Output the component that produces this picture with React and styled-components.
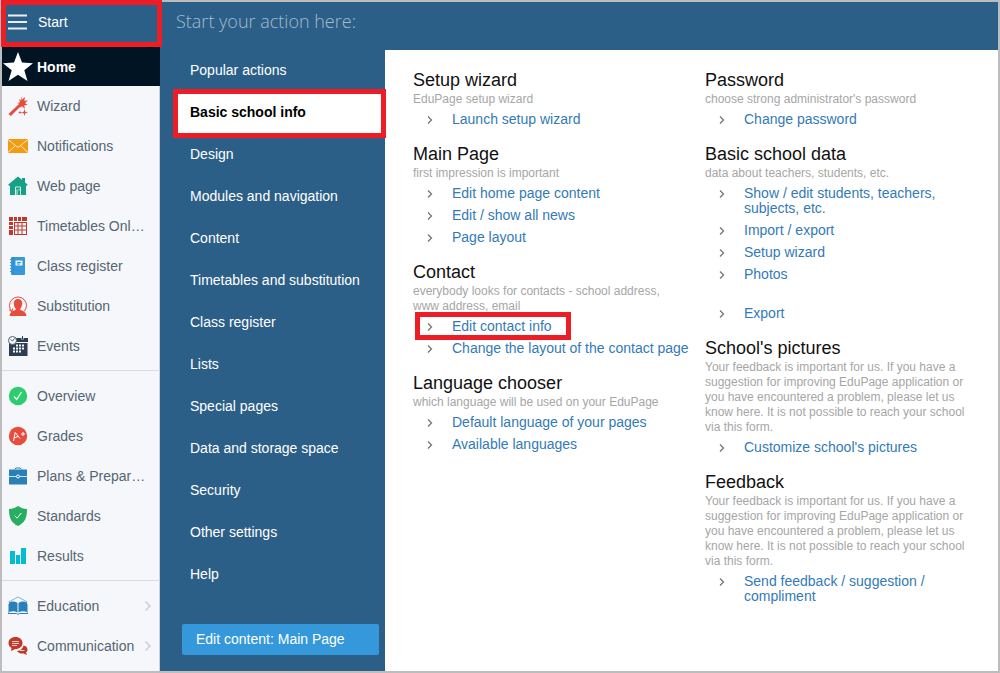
import React from 'react';
import styled, { createGlobalStyle, css } from 'styled-components';

const GlobalStyle = createGlobalStyle`
  *, *::before, *::after { box-sizing: border-box; }
  body {
    margin: 0;
    font-family: "Liberation Sans", Arial, sans-serif;
    font-size: 14px;
    background: #fff;
  }
  a { color: inherit; text-decoration: none; }
  ul { list-style: none; margin: 0; padding: 0; }
`;

const highlight = css`
  position: relative;
  &::after {
    content: "";
    position: absolute;
    border: 5px solid #ee1c25;
    pointer-events: none;
    z-index: 2;
  }
`;

const Frame = styled.div`
  display: flex;
  min-height: 100vh;
  border: 2px solid #bdbdbd;
`;

const Sidebar = styled.nav`
  flex: 0 0 158px;
  background: #f5f7fa;
  box-shadow: inset -1px 0 #c9d1d9;
`;

const StartButton = styled.button`
  ${highlight}
  display: flex;
  align-items: center;
  gap: 10px;
  width: 100%;
  height: 45px;
  padding: 0 6px 6px;
  border: 0;
  background: #2c5f88;
  color: #fff;
  font: inherit;
  text-align: left;
  &::after { inset: -2px -2px 0 -1px; }
`;

const HomeLink = styled.a`
  display: flex;
  align-items: center;
  gap: 4px;
  height: 39px;
  padding-left: 1px;
  background: #001423;
  color: #fff;
  font-weight: bold;
`;

const NavGroup = styled.ul`
  padding: ${(p) => (p.$first ? '0 0 4px' : '5px 0 4px')};
  border-top: ${(p) => (p.$first ? '0' : '1px solid #d9dcdf')};
`;

const NavLink = styled.a`
  display: flex;
  align-items: center;
  gap: 9px;
  height: 40px;
  padding: 0 9px 0 6px;
  color: #566573;
`;

const NavLabel = styled.span`
  flex: 1;
  white-space: nowrap;
`;

const Icon = styled.svg`
  flex: none;
  display: block;
`;

const Main = styled.main`
  flex: 1;
  display: flex;
  flex-direction: column;
  min-width: 0;
  background: #2c5f88;
`;

const Title = styled.h1`
  margin: 0;
  height: 48px;
  padding: 7px 16px 0;
  font: 300 18px/24px "Open Sans", sans-serif;
  color: #a3bccf;
`;

const Body = styled.div`
  flex: 1;
  display: flex;
`;

const Menu = styled.div`
  flex: 0 0 225px;
  display: flex;
  flex-direction: column;
`;

const MenuLink = styled.a`
  display: flex;
  align-items: center;
  height: 42px;
  margin-left: 16px;
  padding: 0 0 2px 14px;
  color: #fff;
  ${(p) =>
    p.$active &&
    css`
      ${highlight}
      background: #fff;
      color: #000;
      font-weight: bold;
      &::after { inset: -3px -1px -4px -3px; }
    `}
`;

const EditButton = styled.button`
  height: 31px;
  margin: 28px 6px 16px 22px;
  padding: 0 14px 2px;
  border: 0;
  border-radius: 2px;
  background: #3498db;
  color: #fff;
  font: inherit;
  text-align: left;
`;

const Content = styled.div`
  flex: 1;
  display: grid;
  grid-template-columns: 1fr 1fr;
  align-items: start;
  gap: 10px;
  padding: 19px 11px 20px 28px;
  background: #fff;
`;

const Section = styled.section`
  margin-bottom: 13px;
`;

const Heading = styled.h2`
  margin: 0 0 1px;
  font: 400 18px/22px "Liberation Sans", Arial, sans-serif;
  color: #111;
`;

const Note = styled.p`
  max-width: 272px;
  margin: 0 0 1px;
  font-size: 12px;
  line-height: 15px;
  color: #a6a6a6;
`;

const ActionItem = styled.li`
  display: flex;
  align-items: flex-start;
  padding: 4px 0 3px 14px;
  margin-top: ${(p) => (p.$spaced ? '17px' : '0')};
  line-height: 15px;
  color: #337ab7;
  ${(p) =>
    p.$marked &&
    css`
      ${highlight}
      &::after { left: 2px; top: -3px; width: 156px; height: 28px; }
    `}
`;

const Bullet = styled(Icon)`
  margin: 4px 19px 0 0;
`;

const icons = {
  wizard: (
    <>
      <path d="M0.500 18 11.500 7.500l2 2L2.800 20z" fill="#e74c3c" />
      <path d="m13 0 1 3.400L17 1l-.7 3.800L20 4.500l-3 2.500 2.800 2-3.600.2L17 13l-3-2.800-1.400 1.200-2-2 1.200-1.300-2.800-1.200 3-.7-1-3.200 2.300 1.400z" fill="#e74c3c" />
      <path d="m16.500 13 .8 2.700 2.700.8-2.700.8-.8 2.700-.8-2.700-2.700-.8 2.700-.8zM12 14.500l.5 1.500 1.500.5-1.500.5-.5 1.500-.5-1.500-1.500-.5 1.500-.5z" fill="#e74c3c" />
    </>
  ),
  mail: (
    <>
      <path d="M0 3h20v14H0z" fill="#f39c12" />
      <path d="m0 3.500 10 8 10-8M0 16.500 7 10M20 16.500 13 10" fill="none" stroke="#fdebd0" strokeWidth="1" />
    </>
  ),
  house: (
    <>
      <path d="m10 .5 9.500 8-.6 1.500-.9-.5V19H2V9.500l-1 .5-.7-1.500zM14 2h3v5l-3-2.500z" fill="#16a085" />
      <path d="M7.500 19v-8h5v8M9 13.500v5.500M11 13v1.500" fill="none" stroke="#d5f0e8" strokeWidth="1" />
    </>
  ),
  table: (
    <>
      <path d="M1 1h18v18H1z" fill="#c0392b" />
      <path d="M5.500 1v18M9.500 1v4M13.500 1v4M1 5.500h18M1 9.500h4M1 13.500h4" stroke="#f5f7fa" strokeWidth="1" />
      <path d="M7 7h2.500v2.500H7zm3.500 0h3v2.500h-3zm4 0H18v2.500h-3.500zM7 10.500h2.500v3H7zm3.500 0h3v3h-3zm4 0H18v3h-3.500zM7 14.500h2.500V18H7zm3.500 0h3V18h-3zm4 0H18V18h-3.500z" fill="#f5f7fa" />
    </>
  ),
  book: (
    <>
      <rect x="3" y="1" width="14" height="18" rx="1" fill="#3498db" />
      <path d="M2 3.500h3M2 6.500h3M2 9.500h3M2 12.500h3M2 15.500h3" stroke="#3498db" strokeWidth="1" />
      <path d="M5.500 1v18" stroke="#2f8bc9" />
      <path d="M7.500 4.500h7v5h-7z" fill="#eaf5fc" />
      <path d="M9 6.500h4M9 8h3" stroke="#3498db" strokeWidth="1" />
    </>
  ),
  person: (
    <>
      <path d="M10 3c2.800 0 4.300 1.900 4.200 4.500-.1 2.300-.9 3.900-1.800 5v1.500c2.500 1 5.600 1.600 6 6H1.600c.4-4.400 3.500-5 6-6v-1.500c-.9-1.100-1.700-2.700-1.800-5C5.700 4.900 7.200 3 10 3z" fill="#e74c3c" />
      <path d="M4 15.500A8.500 8.500 0 1 1 16 15.500" fill="none" stroke="#e74c3c" strokeWidth="1" />
      <path d="M1 13.500 3.800 16l1-3.500" fill="none" stroke="#e74c3c" strokeWidth="1" />
    </>
  ),
  calendar: (
    <>
      <path d="M1 2h19v4H1zM1 7h18.500v13H1z" fill="#2c3e50" />
      <path d="M14.500 0v3.500" stroke="#f5f7fa" strokeWidth="2" />
      <path d="M14.500 0v3" stroke="#2c3e50" />
      <path d="M8 8.500h2v2H8zm3 0h2v2h-2zm3 0h2v2h-2zM5 11.500h2v2H5zm3 0h2v2H8zm3 0h2v2h-2zm3 0h2v2h-2zM5 14.500h2v2H5zm3 0h2v2H8zm3 0h2v2h-2z" fill="#f5f7fa" />
      <circle cx="4.500" cy="4.500" r="4" fill="#f5f7fa" stroke="#53616f" />
      <path d="M2.500 3.500 4.500 5 6.500 2.500" fill="none" stroke="#53616f" />
    </>
  ),
  check: (
    <>
      <circle cx="10" cy="10" r="9.200" fill="#2ecc71" />
      <path d="m6 10.500 2.700 3L13.500 6" fill="none" stroke="#fff" strokeWidth="1.200" />
    </>
  ),
  grade: (
    <>
      <circle cx="10" cy="10" r="9.200" fill="#e74c3c" />
      <path d="m5.500 15 1.700-8.500L12 12.500M6.200 12l4-1.700M13 8h4M15 6v4" fill="none" stroke="#fff" strokeWidth="1" />
    </>
  ),
  briefcase: (
    <>
      <path d="M1 3.500h18v15H1z" fill="#2980b9" />
      <path d="M6.500 3.500 8 2h4l1.500 1.500" fill="none" stroke="#2980b9" />
      <path d="M1 10.500h18" stroke="#cfe3f1" />
      <circle cx="10" cy="10.500" r="1.500" fill="#2980b9" stroke="#fff" />
    </>
  ),
  shield: (
    <>
      <path d="M10 0c2.700 2 5.700 3 9 3 .1 8-1.800 13.800-9 17C2.800 16.800.9 11 1 3c3.300 0 6.300-1 9-3z" fill="#27ae60" />
      <path d="m6.700 9.700 2.400 2.500 4.200-5.200" fill="none" stroke="#fff" />
    </>
  ),
  bars: <path d="M2 5h5v13H2zm6 4h4v9H8zm5-7h5v16h-5z" fill="#00bcd4" />,
  reader: (
    <>
      <path d="M0.500 6 10 1l9.500 5" fill="none" stroke="#7fb2d6" strokeWidth="1" />
      <path d="M1 6.500C4 5 7 5 9.500 7v9.500C7 15 4 15 1 16zM19 6.500C16 5 13 5 10.500 7v9.500C13 15 16 15 19 16z" fill="#2980b9" />
      <path d="M0 8v9.500h8.500L10 18.500l1.500-1H20V8" fill="none" stroke="#2980b9" />
    </>
  ),
  chat: (
    <>
      <path d="M15.500 9.500c2.400.5 4 1.800 4 4 0 1.300-.6 2.300-1.500 3l1 2.500-3.500-1.500c-3 .3-5.700-.7-6.500-2.500 3.500-.3 6-2.500 6.500-5.500z" fill="#c0392b" />
      <path d="M7.500 1c4 0 7 2.500 7 6s-3 6-7 6l-4.500 2 .5-3C1.700 11 .5 9.300.5 7c0-3.500 3-6 7-6z" fill="#c0392b" />
      <path d="M4 5.500h7M4 7.500h7M4 9.500h5" stroke="#f3c9c5" />
      <path d="M12 14.500h4.500" stroke="#f3c9c5" />
    </>
  ),
};

const navGroups = [
  [
    ['wizard', 'Wizard'],
    ['mail', 'Notifications'],
    ['house', 'Web page'],
    ['table', 'Timetables Onl…'],
    ['book', 'Class register'],
    ['person', 'Substitution'],
    ['calendar', 'Events'],
  ],
  [
    ['check', 'Overview'],
    ['grade', 'Grades'],
    ['briefcase', 'Plans & Prepar…'],
    ['shield', 'Standards'],
    ['bars', 'Results'],
  ],
  [
    ['reader', 'Education', true],
    ['chat', 'Communication', true],
  ],
];

const menu = [
  'Popular actions',
  'Basic school info',
  'Design',
  'Modules and navigation',
  'Content',
  'Timetables and substitution',
  'Class register',
  'Lists',
  'Special pages',
  'Data and storage space',
  'Security',
  'Other settings',
  'Help',
];

const feedbackNote =
  'Your feedback is important for us. If you have a suggestion for improving EduPage application or you have encountered a problem, please let us know here. It is not possible to reach your school via this form.';

const columns = [
  [
    { title: 'Setup wizard', note: 'EduPage setup wizard', links: [{ text: 'Launch setup wizard' }] },
    {
      title: 'Main Page',
      note: 'first impression is important',
      links: [{ text: 'Edit home page content' }, { text: 'Edit / show all news' }, { text: 'Page layout' }],
    },
    {
      title: 'Contact',
      note: 'everybody looks for contacts - school address, www address, email',
      links: [{ text: 'Edit contact info', marked: true }, { text: 'Change the layout of the contact page' }],
    },
    {
      title: 'Language chooser',
      note: 'which language will be used on your EduPage',
      links: [{ text: 'Default language of your pages' }, { text: 'Available languages' }],
    },
  ],
  [
    { title: 'Password', note: "choose strong administrator's password", links: [{ text: 'Change password' }] },
    {
      title: 'Basic school data',
      note: 'data about teachers, students, etc.',
      links: [
        { text: 'Show / edit students, teachers, subjects, etc.' },
        { text: 'Import / export' },
        { text: 'Setup wizard' },
        { text: 'Photos' },
        { text: 'Export', spaced: true },
      ],
    },
    { title: "School's pictures", note: feedbackNote, links: [{ text: "Customize school's pictures" }] },
    { title: 'Feedback', note: feedbackNote, links: [{ text: 'Send feedback / suggestion / compliment' }] },
  ],
];

export default function App() {
  return (
    <>
      <GlobalStyle />
      <Frame>
        <Sidebar>
          <StartButton type="button">
            <Icon width="20" height="16" viewBox="0 0 20 16" aria-hidden="true">
              <path d="M0 1.500h19M0 8h19M0 14.500h19" stroke="#e8f0f6" strokeWidth="2" />
            </Icon>
            Start
          </StartButton>
          <HomeLink href="#home">
            <Icon width="30" height="30" viewBox="0 0 30 30" aria-hidden="true">
              <path d="m15 0 4 10.500 11 .7-8.700 7L24.500 29 15 22.700 5.500 29l3.200-10.800L0 11.200l11-.7z" fill="#fff" />
            </Icon>
            Home
          </HomeLink>
          {navGroups.map((group, i) => (
            <NavGroup key={i} $first={i === 0}>
              {group.map(([icon, label, more]) => (
                <li key={label}>
                  <NavLink href={`#${icon}`}>
                    <Icon width="20" height="20" viewBox="0 0 20 20" aria-hidden="true">
                      {icons[icon]}
                    </Icon>
                    <NavLabel>{label}</NavLabel>
                    {more && (
                      <Icon width="6" height="10" viewBox="0 0 6 10" aria-hidden="true">
                        <path d="m.5.500 4.500 4.500L.5 9.500" fill="none" stroke="#d3d6d9" strokeWidth="1.800" />
                      </Icon>
                    )}
                  </NavLink>
                </li>
              ))}
            </NavGroup>
          ))}
        </Sidebar>
        <Main>
          <Title>Start your action here:</Title>
          <Body>
            <Menu>
              {menu.map((label) => (
                <MenuLink key={label} href="#menu" $active={label === 'Basic school info'}>
                  {label}
                </MenuLink>
              ))}
              <EditButton type="button">Edit content: Main Page</EditButton>
            </Menu>
            <Content>
              {columns.map((sections, i) => (
                <div key={i}>
                  {sections.map((section) => (
                    <Section key={section.title}>
                      <Heading>{section.title}</Heading>
                      <Note>{section.note}</Note>
                      <ul>
                        {section.links.map((link) => (
                          <ActionItem key={link.text} $marked={link.marked} $spaced={link.spaced}>
                            <Bullet width="6" height="8" viewBox="0 0 6 8" aria-hidden="true">
                              <path d="m1 .500 3.500 3.500L1 7.500" fill="none" stroke="#7a7472" strokeWidth="1.300" />
                            </Bullet>
                            <a href="#action">{link.text}</a>
                          </ActionItem>
                        ))}
                      </ul>
                    </Section>
                  ))}
                </div>
              ))}
            </Content>
          </Body>
        </Main>
      </Frame>
    </>
  );
}
